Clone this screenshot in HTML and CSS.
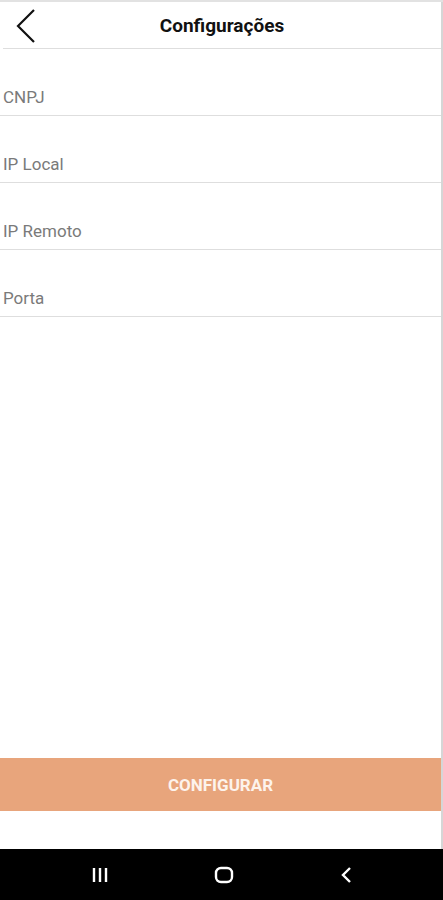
FILE: index.html
```html
<!DOCTYPE html>
<html lang="pt-BR">
<head>
    <meta charset="UTF-8">
    <meta name="viewport" content="width=device-width, initial-scale=1.0">
    <title>Configurações</title>
    <link rel="stylesheet" href="styles.css">
</head>
<body>

    <div class="screen">
        <!-- Header -->
        <div class="header">
            <button class="back" type="button" aria-label="Voltar">
                <svg width="22" height="36" viewBox="0 0 22 36">
                    <path d="M19 2 L3 18 L19 34" fill="none" stroke="#111" stroke-width="2.2"/>
                </svg>
            </button>
            <h1>Configurações</h1>
        </div>

        <!-- Form fields -->
        <form class="fields" id="configForm">
            <input type="text" class="field" placeholder="CNPJ">
            <input type="text" class="field" placeholder="IP Local">
            <input type="text" class="field" placeholder="IP Remoto">
            <input type="text" class="field" placeholder="Porta">
        </form>

        <div class="footer">
            <button type="button" class="btn">CONFIGURAR</button>
        </div>
    </div>

    <!-- Android navigation bar -->
    <div class="navbar">
        <svg width="20" height="20" viewBox="0 0 20 20">
            <path d="M4 3v14M10 3v14M16 3v14" stroke="#fff" stroke-width="2.4"/>
        </svg>
        <svg width="22" height="22" viewBox="0 0 22 22">
            <rect x="3" y="4" width="16" height="14" rx="5" fill="none" stroke="#fff" stroke-width="2.4"/>
        </svg>
        <svg width="20" height="20" viewBox="0 0 20 20">
            <path d="M13 3 L6 10 L13 17" fill="none" stroke="#fff" stroke-width="2.4"/>
        </svg>
    </div>

</body>
</html>
```

FILE: styles.css
```css
/* Global styles */
body, html {
    margin: 0;
    padding: 0;
    height: 100%;
    font-family: Roboto, Arial, sans-serif;
    background-color: #ffffff;
}

body {
    display: flex;
    flex-direction: column;
    border-top: 2px solid #e2e2e2;
    box-sizing: border-box;
}

/* Main screen area */
.screen {
    flex: 1;
    display: flex;
    flex-direction: column;
    border-right: 2px solid #d6d6d6;
}

/* Header */
.header {
    position: relative;
    height: 46px;
    display: flex;
    align-items: center;
    justify-content: center;
    border-bottom: 1px solid #dedede;
    margin-left: 3px;
}

.header h1 {
    margin: 0;
    font-size: 19px;
    font-weight: bold;
    color: #111;
}

.back {
    position: absolute;
    left: 12px;
    top: 6px;
    padding: 0;
    border: none;
    background: none;
}

/* Form fields */
.fields {
    display: flex;
    flex-direction: column;
}

.field {
    height: 67px;
    padding: 30px 0 0 3px;
    border: none;
    border-bottom: 1px solid #dedede;
    box-sizing: border-box;
    font-family: Roboto, Arial, sans-serif;
    font-size: 17px;
    color: #333;
    outline: none;
}

.field::placeholder {
    color: #7a7a7a;
}

/* Bottom button */
.footer {
    margin-top: auto;
    padding-bottom: 38px;
}

.btn {
    display: block;
    width: 100%;
    height: 53px;
    border: none;
    background-color: #e8a57c;
    color: #fdf3ec;
    font-family: Roboto, Arial, sans-serif;
    font-size: 17px;
    font-weight: bold;
    cursor: pointer;
}

/* Navigation bar */
.navbar {
    height: 51px;
    background-color: #000;
    display: flex;
    align-items: center;
    justify-content: space-between;
    padding: 0 86px 0 90px;
}
```
